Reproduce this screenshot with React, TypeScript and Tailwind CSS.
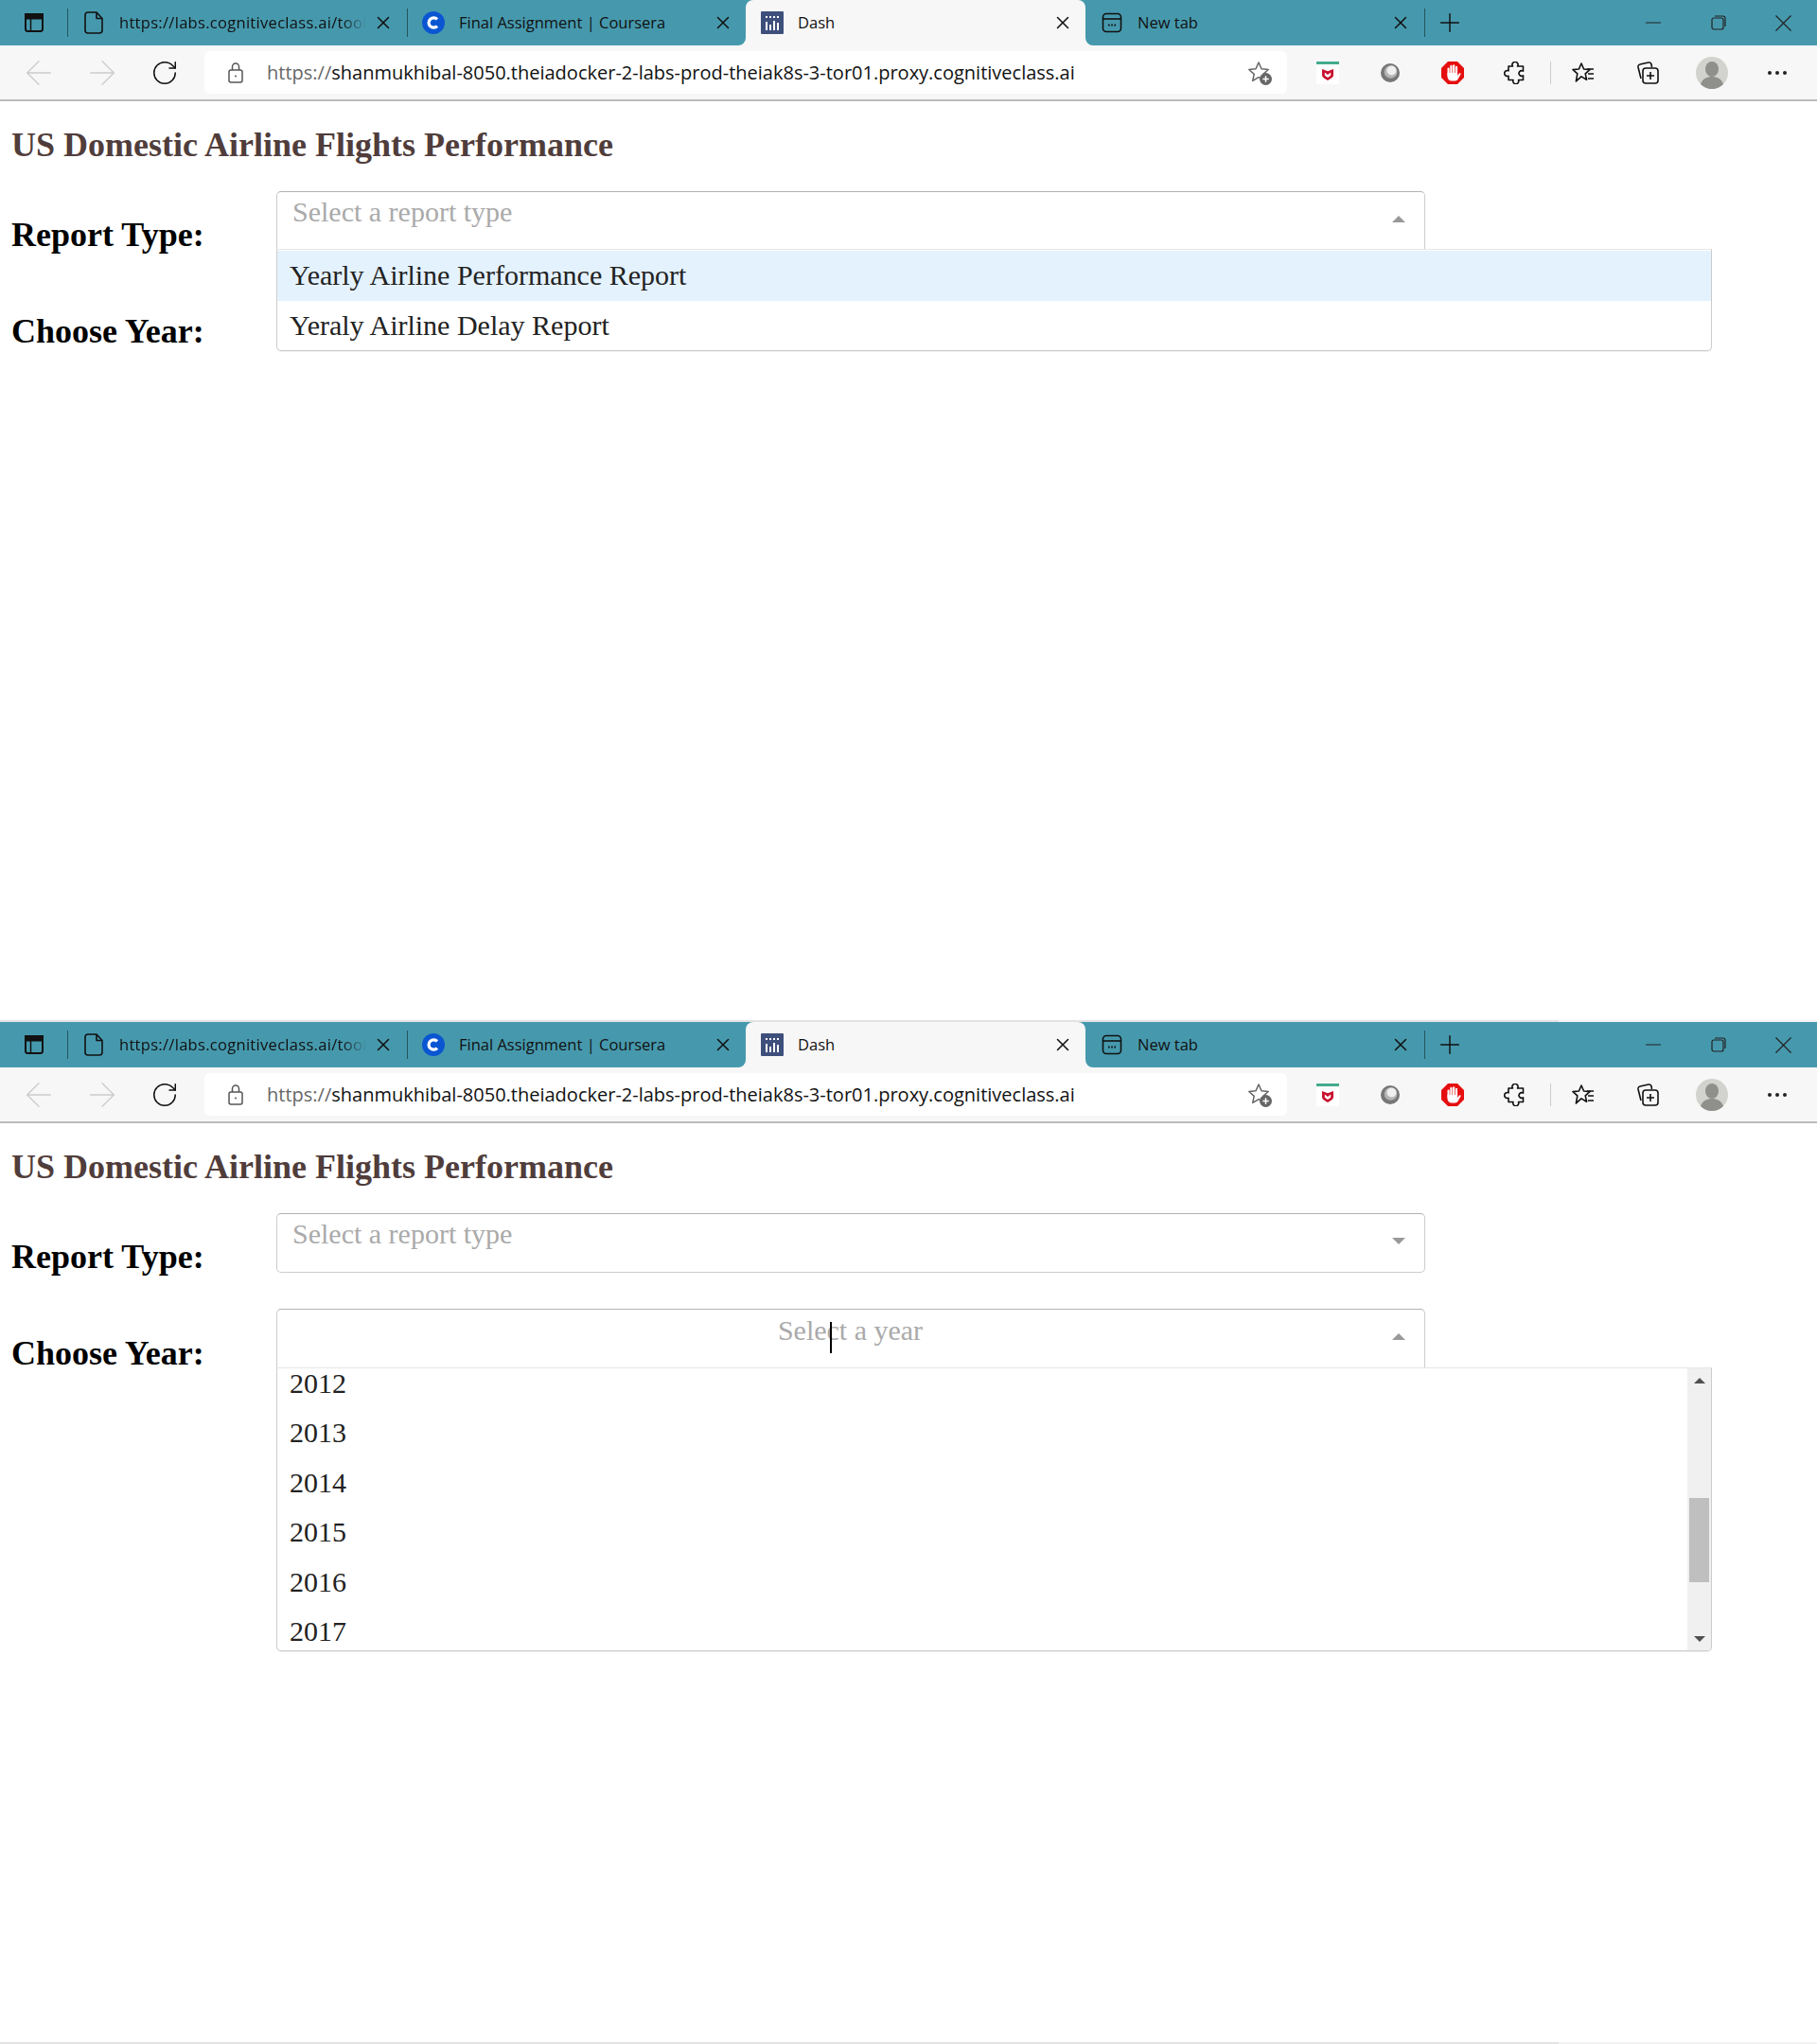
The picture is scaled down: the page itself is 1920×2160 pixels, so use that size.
import React from 'react';
import { Plus, RotateCw, ArrowLeft, ArrowRight, X, Minus } from 'lucide-react';

const TITLE_FONT = "font-['Open_Sans',sans-serif]";
const SERIF = "font-['Liberation_Serif',serif]";

function SidebarIcon() {
  return (
    <svg width="24" height="24" viewBox="0 0 24 24" fill="none" stroke="#111" strokeWidth="2">
      <rect x="3" y="3" width="18" height="18" rx="2.5" />
      <rect x="3" y="3" width="18" height="4.5" fill="#111" />
      <path d="M8.5 8v12" strokeWidth="1.5" />
    </svg>
  );
}

function DocIcon() {
  return (
    <svg width="24" height="26" viewBox="0 0 24 26" fill="none" stroke="#111" strokeWidth="1.6" strokeLinejoin="round">
      <path d="M6 2h9l6 6.500V21a3 3 0 0 1-3 3H6a3 3 0 0 1-3-3V5a3 3 0 0 1 3-3z" />
      <path d="M15 2v6.500h6" />
    </svg>
  );
}

function CourseraIcon() {
  return (
    <svg width="24" height="24" viewBox="0 0 24 24" fill="none">
      <circle cx="12" cy="12" r="12" fill="#0a56d2" />
      <path d="M16 8.400a5.200 5.200 0 1 0 0 7.200" stroke="#fff" strokeWidth="3.200" />
    </svg>
  );
}

function DashIcon() {
  return (
    <svg width="24" height="24" viewBox="0 0 24 24">
      <rect width="24" height="24" rx="1" fill="#3e4f7c" />
      <g fill="#fff">
        <rect x="5" y="11" width="2" height="9" />
        <rect x="9" y="14" width="2" height="6" />
        <rect x="13" y="10" width="2" height="10" />
        <rect x="17" y="12" width="2" height="8" />
        <rect x="5" y="5" width="2" height="2" />
        <rect x="9" y="5" width="2" height="2" />
        <rect x="13" y="5" width="2" height="2" />
        <rect x="17" y="5" width="2" height="2" />
      </g>
    </svg>
  );
}

function NewTabIcon() {
  return (
    <svg width="24" height="24" viewBox="0 0 24 24" fill="none" stroke="#111" strokeWidth="1.6">
      <rect x="2.500" y="2.500" width="19" height="19" rx="3.500" />
      <path d="M2.500 8h19" />
      <path d="M8 14.500h1.600M11.200 14.500h1.600M14.400 14.500h1.600" strokeWidth="2" />
    </svg>
  );
}

function LockIcon() {
  return (
    <svg width="20" height="24" viewBox="0 0 20 24" fill="none" stroke="#555" strokeWidth="1.500">
      <rect x="3" y="9" width="14" height="13" rx="2" />
      <path d="M6.500 9V5.500a3.500 3.500 0 0 1 7 0V9" />
      <circle cx="10" cy="15.500" r="1" fill="#555" stroke="none" />
    </svg>
  );
}

function StarPlusIcon() {
  return (
    <svg width="28" height="28" viewBox="0 0 28 28" fill="none">
      <path d="M13 3l3 6.800 7.200.7-5.400 4.900 1.500 7-6.300-3.700-6.300 3.700 1.500-7-5.400-4.900 7.200-.7z" stroke="#666" strokeWidth="1.500" strokeLinejoin="round" />
      <circle cx="20.500" cy="20.500" r="6.500" fill="#666" />
      <path d="M20.500 17.300v6.400M17.300 20.500h6.400" stroke="#fff" strokeWidth="1.500" />
    </svg>
  );
}

function McAfeeIcon() {
  return (
    <svg width="24" height="24" viewBox="0 0 24 24">
      <rect width="24" height="24" fill="#fff" />
      <rect width="24" height="3" fill="#45ab8f" />
      <path d="M6 8l6 2.200L18 8v6.500c0 2-2.500 3.500-6 5.500-3.500-2-6-3.500-6-5.500z" fill="#c8102e" />
      <path d="M8.800 11.500l3.200 2.500 3.200-2.500v3.300L12 17l-3.200-2.200z" fill="#fff" />
    </svg>
  );
}

function BallIcon() {
  return (
    <svg width="22" height="22" viewBox="0 0 22 22">
      <circle cx="11" cy="11" r="10" fill="#777" />
      <circle cx="11.500" cy="10" r="6.800" fill="#b5b5b5" />
      <circle cx="12.500" cy="8.500" r="5" fill="#efefef" />
    </svg>
  );
}

function StopIcon() {
  return (
    <svg width="24" height="24" viewBox="0 0 24 24">
      <path d="M7 0h10l7 7v10l-7 7H7l-7-7V7z" fill="#e60f0f" />
      <g fill="#fff">
        <rect x="6.500" y="6.500" width="2.200" height="9" rx="1.100" />
        <rect x="9.300" y="3.800" width="2.200" height="10" rx="1.100" />
        <rect x="12.100" y="3.300" width="2.200" height="10" rx="1.100" />
        <rect x="14.900" y="4.800" width="2.200" height="10" rx="1.100" />
        <path d="M6.500 12h10.600v3l2-2.500c.8-.8 1.900.1 1.400 1l-2.800 5c-.7 1.300-1.800 2-3.200 2h-3.500c-2.500 0-4.500-2-4.500-4.500z" />
      </g>
    </svg>
  );
}

function PuzzleIcon() {
  return (
    <svg width="24" height="24" viewBox="0 0 24 24" fill="none" stroke="#111" strokeWidth="1.600" strokeLinejoin="round">
      <path d="M9.500 5a3 3 0 1 1 5 0h6v5.200a2.800 2.800 0 1 0 0 4.600V19.500h-5a3 3 0 1 1-5.500 0H5v-4.300a3 3 0 1 1 0-5.400V5z" />
    </svg>
  );
}

function FavoritesIcon() {
  return (
    <svg width="26" height="26" viewBox="0 0 26 26" fill="none" stroke="#111" strokeWidth="1.600" strokeLinejoin="round">
      <path d="M11 3l2.600 6 6.400.6-4.800 4.300 1.400 6.300-5.600-3.300-5.600 5 1.400-8-4.800-4.300 6.400-.6z" />
      <path d="M17 9h7M18 14h6M18 19h6" />
    </svg>
  );
}

function CollectionsIcon() {
  return (
    <svg width="26" height="28" viewBox="0 0 26 28" fill="none" stroke="#111" strokeWidth="1.600">
      <path d="M6 20L3 8a2.500 2.500 0 0 1 2-3l9-2a2.500 2.500 0 0 1 3 2l.5 3" />
      <rect x="8" y="9" width="16" height="16" rx="3" />
      <path d="M16 13v8M12 17h8" />
    </svg>
  );
}

function Avatar() {
  return (
    <svg width="34" height="34" viewBox="0 0 34 34">
      <circle cx="17" cy="17" r="17" fill="#d2d2ce" />
      <ellipse cx="17" cy="13" rx="7" ry="8" fill="#8f8f8b" />
      <path d="M5 29c2-6 7-8 12-8s10 2 12 8a17 17 0 0 1-24 0z" fill="#8f8f8b" />
    </svg>
  );
}

function Tab({ icon, title, active, fade, sep }: { icon: React.ReactNode; title: string; active?: boolean; fade?: boolean; sep?: boolean }) {
  return (
    <div className={`relative flex items-center h-12 ${active ? 'bg-[#f7f7f7] rounded-t-lg' : ''}`}>
      {active && (
        <>
          <div className="absolute bottom-0 -left-2 size-2 bg-[#f7f7f7]">
            <div className="size-full rounded-br-lg bg-[#4699ad]" />
          </div>
          <div className="absolute bottom-0 -right-2 size-2 bg-[#f7f7f7]">
            <div className="size-full rounded-bl-lg bg-[#4699ad]" />
          </div>
        </>
      )}
      {sep && <div className="w-px h-[30px] bg-[#24545f]" />}
      <div className={`flex justify-center ${sep ? 'w-[54px]' : 'w-[55px]'}`}>{icon}</div>
      <div className={`${active ? 'w-[262px]' : sep ? 'w-[261px]' : 'w-[260px]'} overflow-hidden whitespace-nowrap text-[16.500px] text-[#111] ${TITLE_FONT} ${fade ? 'tracking-[0.3px] [mask-image:linear-gradient(to_right,black_90%,transparent)]' : ''}`}>
        {title}
      </div>
      <X className="ml-[7px] text-[#111]" size={22} strokeWidth={1.7} />
    </div>
  );
}

function Select({ placeholder, centered, open }: { placeholder: string; centered?: boolean; open?: boolean }) {
  return (
    <div className={`relative w-[1214px] h-[63px] bg-white border border-[#ccc] border-t-[#b3b3b3] ${open ? 'rounded-t-[5px] border-b-0' : 'rounded-[5px]'}`}>
      <div className={`text-[30px] leading-[40px] text-[#aaa] ${SERIF} ${centered ? 'pt-[2px] text-center pr-[1px]' : 'pt-[1px] pl-4'}`}>{placeholder}</div>
      <div className={`absolute right-[20px] top-[25px] w-0 h-0 border-x-[7px] border-x-transparent ${open ? 'border-b-[7px] border-b-[#999]' : 'border-t-[7px] border-t-[#999]'}`} />
    </div>
  );
}

function Menu({ children, height, top }: { children: React.ReactNode; height: string; top: string }) {
  return (
    <div className={`absolute left-0 ${top} z-10 w-[1517px] ${height} overflow-hidden bg-white border border-[#ccc] border-t-[#e6e6e6] rounded-b-[5px] shadow-[0_1px_0_rgba(0,0,0,0.06)]`}>
      {children}
    </div>
  );
}

function Option({ label, highlighted }: { label: string; highlighted?: boolean }) {
  return (
    <div className={`h-[53px] pl-[13px] text-[30px] leading-[51px] text-[#222] ${highlighted ? 'bg-[#e4f2fe]' : ''}`}>
      {label}
    </div>
  );
}

function Row({ label, children, className }: { label: string; children: React.ReactNode; className: string }) {
  return (
    <div className="flex">
      <div className={`w-[292px] pl-[12px] text-[36px] leading-[42px] font-bold text-black ${SERIF} ${className}`}>{label}</div>
      <div className="relative">{children}</div>
    </div>
  );
}

function Browser() {
  return (
    <>
      <div className="flex h-12 bg-[#4699ad]">
        <div className="flex w-[71px] items-center pl-6"><SidebarIcon /></div>
        <div className="w-[359px]"><Tab sep fade icon={<DocIcon />} title="https://labs.cognitiveclass.ai/tool" /></div>
        <div className="w-[358px]"><Tab sep icon={<CourseraIcon />} title="Final Assignment | Coursera" /></div>
        <div className="w-[359px]"><Tab active icon={<DashIcon />} title="Dash" /></div>
        <div className="w-[358px]"><Tab icon={<NewTabIcon />} title="New tab" /></div>
        <div className="flex items-center">
          <div className="w-px h-[30px] bg-[#24545f]" />
          <Plus className="ml-[10px] text-[#111]" size={32} strokeWidth={1.100} />
          <Minus className="ml-[186px] text-[#222]" size={26} strokeWidth={1} />
          <svg className="ml-[47px]" width="18" height="18" viewBox="0 0 18 18" fill="none" stroke="#222" strokeWidth="1.200">
            <rect x="2" y="4" width="12" height="12" rx="2" />
            <path d="M5 2h8.500A2.500 2.500 0 0 1 16 4.500V13" />
          </svg>
          <X className="ml-[44px] text-[#222]" size={31} strokeWidth={0.900} />
        </div>
      </div>
      <div className="flex h-[59px] items-start bg-[#f7f7f7] border-b-2 border-[#bbb]">
        <div className="flex w-[216px] h-[57px] items-center">
          <ArrowLeft className="ml-[20px] text-[#ccc]" size={42} strokeWidth={0.800} />
          <ArrowRight className="ml-[25px] text-[#ccc]" size={42} strokeWidth={0.800} />
          <RotateCw className="ml-[30px] text-[#111]" size={30} strokeWidth={1.200} />
        </div>
        <div className={`mt-[6px] flex w-[1144px] h-[45px] items-center rounded-md bg-white ${TITLE_FONT}`}>
          <div className="flex ml-[23px]"><LockIcon /></div>
          <div className="ml-[23px] text-[20px] whitespace-nowrap text-[#111]">
            <span className="text-[#666]">https://</span>shanmukhibal-8050.theiadocker-2-labs-prod-theiak8s-3-tor01.proxy.cognitiveclass.ai
          </div>
          <div className="flex ml-auto mr-[15px]"><StarPlusIcon /></div>
        </div>
        <div className="flex h-[57px] items-center">
          <div className="ml-[31px] flex"><McAfeeIcon /></div>
          <div className="ml-[43px] flex"><BallIcon /></div>
          <div className="ml-[43px] flex"><StopIcon /></div>
          <div className="ml-[42px] flex"><PuzzleIcon /></div>
          <div className="ml-[25px] w-px h-[24px] bg-[#ccc]" />
          <div className="ml-[21px] flex"><FavoritesIcon /></div>
          <div className="ml-[42px] flex"><CollectionsIcon /></div>
          <div className="ml-[38px] flex"><Avatar /></div>
          <div className="ml-[42px] flex gap-[4px]">
            <span className="size-[4px] rounded-full bg-[#222]" />
            <span className="size-[4px] rounded-full bg-[#222]" />
            <span className="size-[4px] rounded-full bg-[#222]" />
          </div>
        </div>
      </div>
    </>
  );
}

function Heading() {
  return (
    <h1 className={`pl-[12px] pt-[26px] pb-[29px] text-[36px] leading-[40px] font-bold text-[#503d3b] ${SERIF}`}>
      US Domestic Airline Flights Performance
    </h1>
  );
}

function Edge() {
  return (
    <div className="flex h-[2px]">
      <div className="w-[1647px] bg-[#e3e3e3]" />
      <div className="flex-1 bg-[#f3f3f3]" />
    </div>
  );
}

export default function App() {
  const years = ['2012', '2013', '2014', '2015', '2016', '2017'];
  return (
    <div className={`flex flex-col w-[1920px] h-[2160px] bg-white ${SERIF}`}>
      <section className="h-[1078px]">
        <Browser />
        <Heading />
        <div className="mb-[34px]">
          <Row label="Report Type:" className="pt-[25px]">
            <Select placeholder="Select a report type" open />
            <Menu top="top-[61px]" height="h-[108px]">
              <div className="pt-[1px]">
                <Option label="Yearly Airline Performance Report" highlighted />
                <Option label="Yeraly Airline Delay Report" />
              </div>
            </Menu>
          </Row>
        </div>
        <Row label="Choose Year:" className="pt-[26px]">
          <div className="h-[63px]" />
        </Row>
      </section>
      <Edge />
      <section className="flex-1">
        <Browser />
        <Heading />
        <div className="mb-[34px]">
          <Row label="Report Type:" className="pt-[25px]">
            <Select placeholder="Select a report type" />
          </Row>
        </div>
        <Row label="Choose Year:" className="pt-[26px]">
          <Select placeholder="Select a year" centered open />
          <div className="absolute left-[585px] top-[14px] w-[2px] h-[33px] bg-black" />
          <Menu top="top-[62px]" height="h-[300px]">
            <div className="-mt-[10px] mr-[25px]">
              {years.map(y => <div key={y} className="h-[52.400px] pl-[13px] text-[30px] leading-[52px] text-[#222]">{y}</div>)}
            </div>
            <div className="absolute right-0 top-0 bottom-0 flex w-[25px] flex-col items-center bg-[#f0f0f0]">
              <div className="mt-[10px] w-0 h-0 border-x-[6px] border-x-transparent border-b-[6px] border-b-[#505050]" />
              <div className="mt-[121px] w-[21px] h-[89px] bg-[#bfbfbf]" />
              <div className="mt-[57px] w-0 h-0 border-x-[6px] border-x-transparent border-t-[6px] border-t-[#505050]" />
            </div>
          </Menu>
        </Row>
      </section>
      <Edge />
    </div>
  );
}
